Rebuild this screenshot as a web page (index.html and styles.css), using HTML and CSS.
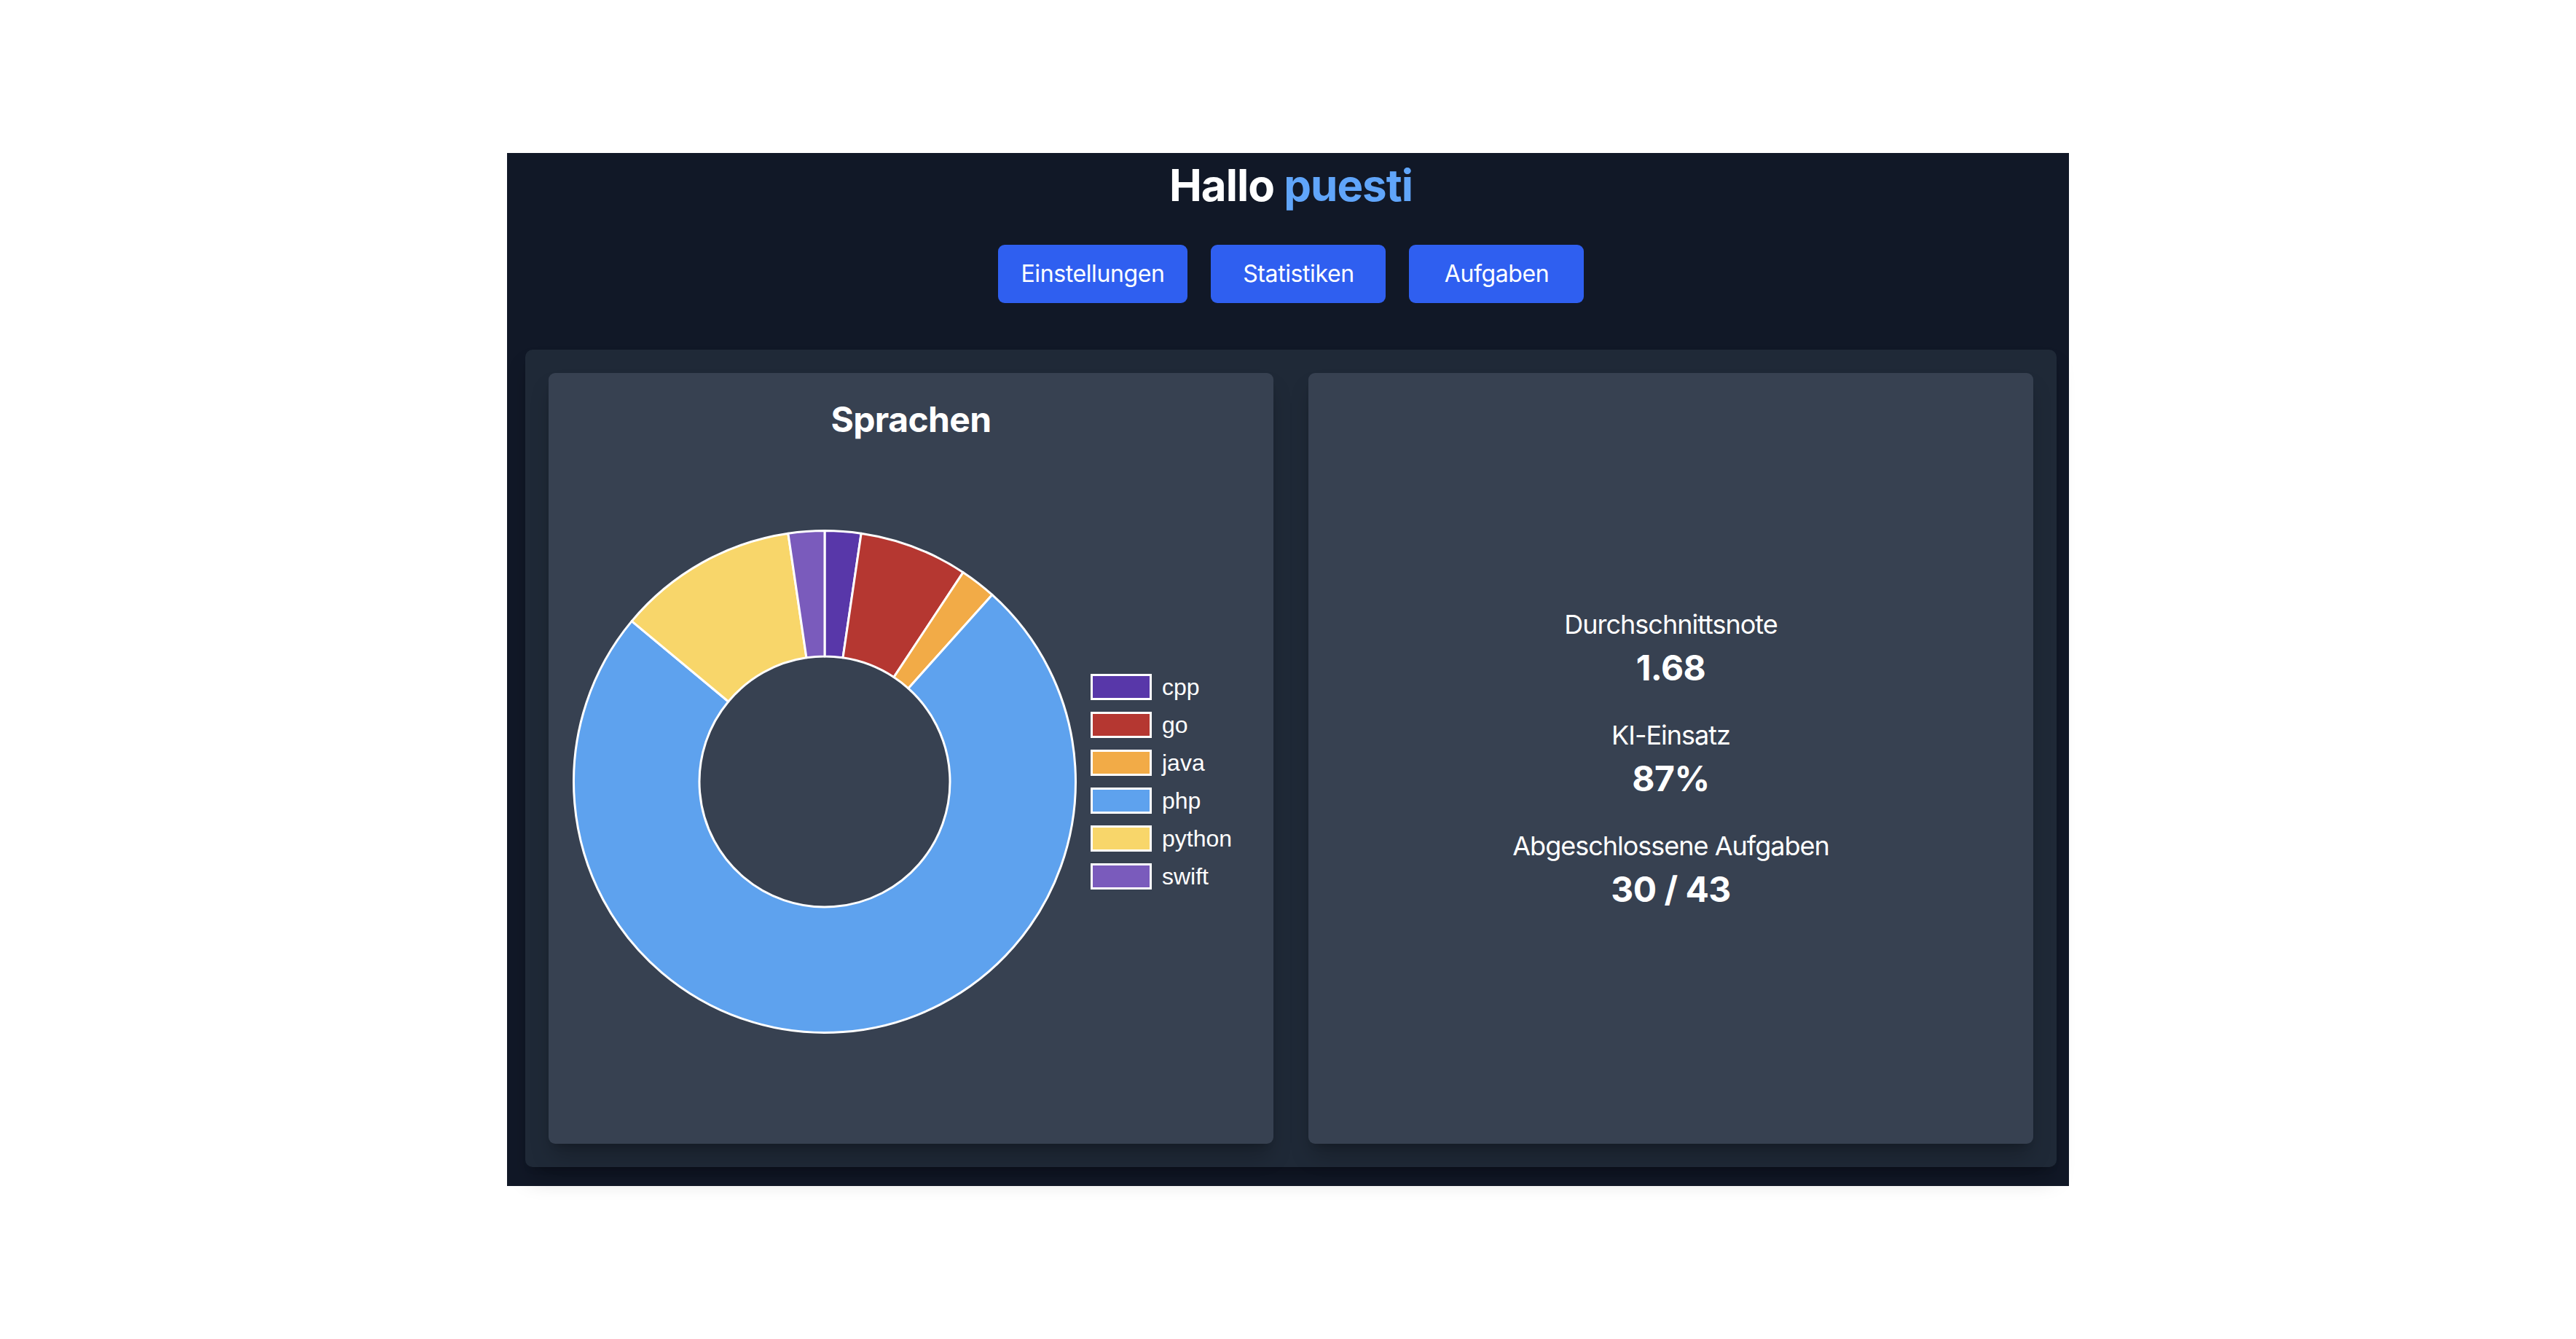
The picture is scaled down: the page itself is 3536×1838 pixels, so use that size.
FILE: index.html
```html
<!DOCTYPE html>
<html lang="de">
<head>
<meta charset="utf-8">
<title>Dashboard</title>
<link rel="stylesheet" href="styles.css">
</head>
<body>
<main class="app">
  <h1 class="greeting">Hallo <span class="name">puesti</span></h1>
  <nav class="nav">
    <button class="btn">Einstellungen</button>
    <button class="btn">Statistiken</button>
    <button class="btn">Aufgaben</button>
  </nav>
  <section class="panel">
    <div class="card card-chart">
      <h2 class="card-title">Sprachen</h2>
      <div class="chart">
        <svg class="donut" width="694" height="694" viewBox="0 0 694 694">
          <g stroke="#ffffff" stroke-width="3" stroke-linejoin="round">
            <path fill="#5837a9" d="M347 2.5 A344.5 344.5 0 0 1 397.16 6.17 L372.04 176.83 A172 172 0 0 0 347 175 Z"/>
            <path fill="#b53731" d="M397.16 6.17 A344.5 344.5 0 0 1 537.08 59.69 L441.90 203.55 A172 172 0 0 0 372.04 176.83 Z"/>
            <path fill="#f2ab47" d="M537.08 59.69 A344.5 344.5 0 0 1 576.89 90.43 L461.78 218.90 A172 172 0 0 0 441.90 203.55 Z"/>
            <path fill="#5ea2ee" d="M576.89 90.43 A344.5 344.5 0 1 1 82.20 126.63 L214.79 236.98 A172 172 0 1 0 461.78 218.90 Z"/>
            <path fill="#f8d66a" d="M82.20 126.63 A344.5 344.5 0 0 1 296.84 6.17 L321.96 176.83 A172 172 0 0 0 214.79 236.98 Z"/>
            <path fill="#7a5bbc" d="M296.84 6.17 A344.5 344.5 0 0 1 347 2.5 L347 175 A172 172 0 0 0 321.96 176.83 Z"/>
          </g>
        </svg>
        <ul class="legend">
          <li class="legend-item"><span class="swatch sw-cpp"></span>cpp</li>
          <li class="legend-item"><span class="swatch sw-go"></span>go</li>
          <li class="legend-item"><span class="swatch sw-java"></span>java</li>
          <li class="legend-item"><span class="swatch sw-php"></span>php</li>
          <li class="legend-item"><span class="swatch sw-python"></span>python</li>
          <li class="legend-item"><span class="swatch sw-swift"></span>swift</li>
        </ul>
      </div>
    </div>
    <div class="card card-stats">
      <div class="stat">
        <p class="stat-label">Durchschnittsnote</p>
        <p class="stat-value">1.68</p>
      </div>
      <div class="stat">
        <p class="stat-label">KI-Einsatz</p>
        <p class="stat-value">87%</p>
      </div>
      <div class="stat">
        <p class="stat-label">Abgeschlossene Aufgaben</p>
        <p class="stat-value">30 / 43</p>
      </div>
    </div>
  </section>
</main>
</body>
</html>
```

FILE: styles.css
```css
* {
  box-sizing: border-box;
}

html, body {
  margin: 0;
  padding: 0;
}

body {
  background: #ffffff;
  min-height: 100vh;
  display: flex;
  align-items: center;
  justify-content: center;
  font-family: Inter, "Noto Sans", "Liberation Sans", sans-serif;
  color: #ffffff;
}

.app {
  width: 2144px;
  background: #111827;
  padding: 8px 17px 26px 25px;
  display: flex;
  flex-direction: column;
  align-items: center;
}

.greeting {
  margin: 0;
  font-size: 60px;
  line-height: 72px;
  font-weight: 700;
  letter-spacing: -1px;
  color: #ffffff;
}

.name {
  color: #60a5fa;
}

.nav {
  margin-top: 46px;
  display: flex;
  gap: 32px;
}

.btn {
  height: 80px;
  min-width: 240px;
  padding: 0 32px;
  border: none;
  border-radius: 9px;
  background: #2f5ff0;
  color: #ffffff;
  font-family: Inter, "Noto Sans", "Liberation Sans", sans-serif;
  font-size: 32px;
  line-height: 48px;
  letter-spacing: -0.4px;
  text-align: center;
  cursor: pointer;
}

.panel {
  margin-top: 64px;
  align-self: stretch;
  background: #1f2937;
  border-radius: 10px;
  padding: 32px;
  display: grid;
  grid-template-columns: 1fr 1fr;
  gap: 48px;
  box-shadow: 0 20px 30px -6px rgba(0, 0, 0, 0.25), 0 8px 12px -8px rgba(0, 0, 0, 0.2);
}

.card {
  background: #374151;
  border-radius: 9px;
  height: 1058px;
  box-shadow: 0 20px 30px -6px rgba(0, 0, 0, 0.25), 0 8px 12px -8px rgba(0, 0, 0, 0.2);
}

.card-chart {
  padding: 32px;
}

.card-title {
  margin: 0;
  text-align: center;
  font-size: 48px;
  line-height: 64px;
  font-weight: 700;
  letter-spacing: -0.6px;
}

.chart {
  margin-top: 118px;
  display: flex;
  align-items: center;
  gap: 18px;
}

.donut {
  display: block;
  flex: none;
}

.legend {
  list-style: none;
  margin: 0;
  padding: 0;
  display: flex;
  flex-direction: column;
  gap: 16px;
  font-family: "Liberation Sans", Arial, sans-serif;
  font-size: 32px;
}

.legend-item {
  display: flex;
  align-items: center;
  gap: 14px;
  height: 36px;
  line-height: 36px;
}

.swatch {
  width: 84px;
  height: 36px;
  border: 3px solid #ffffff;
  flex: none;
}

.sw-cpp { background: #5837a9; }
.sw-go { background: #b53731; }
.sw-java { background: #f2ab47; }
.sw-php { background: #5ea2ee; }
.sw-python { background: #f8d66a; }
.sw-swift { background: #7a5bbc; }

.card-stats {
  padding: 32px;
  display: flex;
  flex-direction: column;
  align-items: center;
  justify-content: center;
  gap: 32px;
}

.stat {
  text-align: center;
}

.stat-label {
  margin: 0;
  font-size: 36px;
  line-height: 56px;
  letter-spacing: -1px;
}

.stat-value {
  margin: 0;
  font-size: 48px;
  line-height: 64px;
  font-weight: 700;
  letter-spacing: -0.5px;
}
```
